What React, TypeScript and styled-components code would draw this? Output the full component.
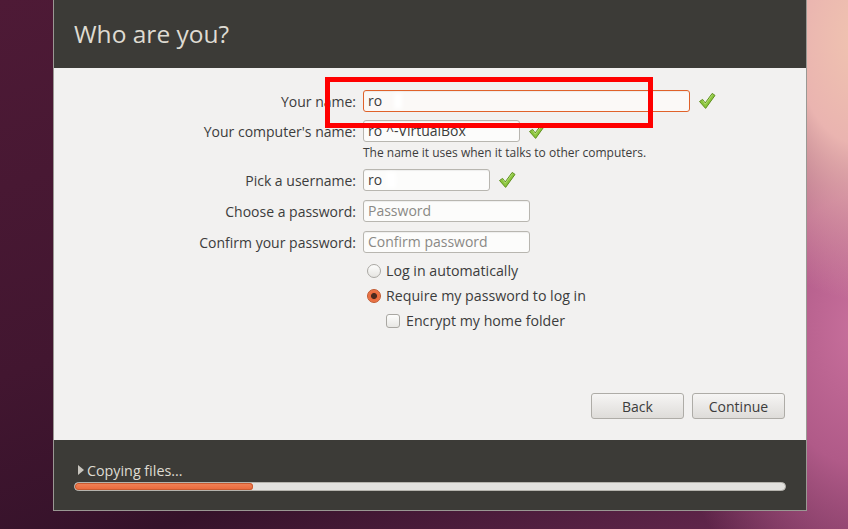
import React from "react";
import styled, { createGlobalStyle } from "styled-components";

const Global = createGlobalStyle`
  html, body { margin: 0; padding: 0; }
  body {
    width: 848px;
    height: 529px;
    overflow: hidden;
    font-family: "Open Sans", "DejaVu Sans", sans-serif;
    background:
      radial-gradient(ellipse 160px 260px at 860px 40px, #f0c4b0 0%, #eab4b0 40%, rgba(220,150,170,0) 100%),
      radial-gradient(ellipse 200px 300px at 860px 330px, #c8709c 0%, #b05a88 45%, rgba(150,70,110,0) 100%),
      linear-gradient(160deg, #4e1a36 0%, #421630 45%, #35122a 70%, #6a2a52 100%);
  }
`;

const Desktop = styled.div`
  position: relative;
  width: 848px;
  height: 529px;
  display: flex;
  align-items: flex-start;
  padding-left: 53px;
  box-sizing: border-box;
`;

const Window = styled.div`
  width: 754px;
  display: flex;
  flex-direction: column;
  border: 1px solid #9a9893;
  border-top: none;
  box-sizing: border-box;
`;

const Header = styled.div`
  height: 68px;
  background: #3c3b37;
  display: flex;
  align-items: center;
  padding-left: 20px;
`;

const Title = styled.h1`
  margin: 0;
  font-family: "Open Sans", sans-serif;
  font-weight: 400;
  font-size: 24.5px;
  color: #dfdbd2;
  margin-top: -2px;
`;

const Content = styled.div`
  height: 372px;
  background: #f2f1f0;
  display: flex;
  flex-direction: column;
  padding: 22px 21px 21px 0;
  box-sizing: border-box;
`;

const Form = styled.div`
  display: flex;
  flex-direction: column;
`;

const Row = styled.div<{ $gap?: number }>`
  display: flex;
  align-items: center;
  height: 22px;
  margin-bottom: ${(p) => p.$gap ?? 8}px;
`;

const Label = styled.div`
  width: 309px;
  padding-right: 7px;
  box-sizing: border-box;
  text-align: right;
  font-size: 14px;
  color: #3c3c3c;
  white-space: nowrap;
`;

const Input = styled.div<{ $w: number; $focus?: boolean; $placeholder?: boolean }>`
  position: relative;
  width: ${(p) => p.$w}px;
  height: 22px;
  box-sizing: border-box;
  border: 1px solid ${(p) => (p.$focus ? "#e0622a" : "#b8b6b0")};
  border-radius: 3px;
  background: ${(p) => (p.$focus ? "#fbf9f7" : "#fcfcfb")};
  box-shadow: inset 0 1px 1px rgba(0, 0, 0, 0.06);
  padding-left: 4px;
  font-size: 14px;
  line-height: 20px;
  color: ${(p) => (p.$placeholder ? "#8a8985" : "#3c3c3c")};
  overflow: hidden;
  white-space: nowrap;
`;

const Smudge = styled.span<{ $left: number; $w: number }>`
  position: absolute;
  top: 2px;
  left: ${(p) => p.$left}px;
  width: ${(p) => p.$w}px;
  height: 16px;
  background: #ffffff;
  filter: blur(2px);
`;

const CheckWrap = styled.div<{ $ml: number }>`
  margin-left: ${(p) => p.$ml}px;
  width: 20px;
  height: 20px;
  display: flex;
  align-items: center;
  justify-content: center;
`;

const Helper = styled.div`
  padding-left: 309px;
  font-size: 12px;
  color: #3c3c3c;
  height: 14px;
  line-height: 14px;
  margin-top: -2px;
  margin-bottom: 9px;
`;

const Options = styled.div`
  display: flex;
  flex-direction: column;
  padding-left: 313px;
  margin-top: 5px;
`;

const OptRow = styled.div<{ $indent?: number }>`
  display: flex;
  align-items: center;
  height: 25px;
  padding-left: ${(p) => p.$indent ?? 0}px;
  font-size: 14.2px;
  color: #3c3c3c;
`;

const Radio = styled.span<{ $on?: boolean }>`
  width: 14px;
  height: 14px;
  border-radius: 50%;
  box-sizing: border-box;
  margin-right: 5px;
  border: 1px solid ${(p) => (p.$on ? "#c0562c" : "#aaa8a3")};
  background: ${(p) =>
    p.$on
      ? "radial-gradient(circle, #4a2a1e 0 2.6px, #e8683a 3.4px, #f08a5e 100%)"
      : "linear-gradient(#fdfdfc, #e6e5e2)"};
`;

const Check = styled.span`
  width: 14px;
  height: 14px;
  border-radius: 3px;
  box-sizing: border-box;
  margin-right: 6px;
  border: 1px solid #a9a7a2;
  background: linear-gradient(#fdfdfc, #e8e7e4);
`;

const Spacer = styled.div`
  flex: 1;
`;

const Buttons = styled.div`
  display: flex;
  justify-content: flex-end;
  gap: 8px;
`;

const Button = styled.button`
  width: 93px;
  height: 26px;
  border: 1px solid #aeaca7;
  border-radius: 3px;
  background: linear-gradient(#f6f5f4, #dedcd9);
  font-family: "Open Sans", sans-serif;
  font-size: 14px;
  color: #3c3c3c;
  padding: 0;
`;

const Footer = styled.div`
  height: 70px;
  background: #3c3b37;
  display: flex;
  flex-direction: column;
  padding: 21px 20px 0 20px;
  box-sizing: border-box;
`;

const Status = styled.div`
  display: flex;
  align-items: center;
  font-size: 14.3px;
  color: #dfdbd2;
  height: 18px;
`;

const Triangle = styled.span`
  width: 0;
  height: 0;
  border-top: 5px solid transparent;
  border-bottom: 5px solid transparent;
  border-left: 6px solid #c8c5be;
  margin: 0 3px 0 4px;
`;

const Track = styled.div`
  margin-top: 3px;
  height: 9px;
  width: 712px;
  border-radius: 5px;
  background: #e2e1de;
  border: 1px solid #b5b3ad;
  box-sizing: border-box;
  overflow: hidden;
`;

const Fill = styled.div`
  height: 100%;
  border-radius: 5px;
  background: linear-gradient(#f28358, #e8683a);
  box-shadow: inset 0 0 0 1px #c95a30;
`;

const Annotation = styled.div`
  position: absolute;
  left: 325px;
  top: 77px;
  width: 328px;
  height: 51px;
  border: 5px solid #ff0000;
  box-sizing: border-box;
  pointer-events: none;
`;

const CheckIcon = () => (
  <svg width="20" height="20" viewBox="0 0 20 20">
    <path
      d="M2.5 10.5 L5.6 8.4 L8.2 12 L15.2 2.4 L18 4.4 L8.6 17.4 Z"
      fill="#8cc63e"
      stroke="#5f8f1e"
      strokeWidth="1"
      strokeLinejoin="round"
    />
    <path d="M5.8 9.6 L8.3 13.2 L15.4 3.6" fill="none" stroke="#c2e68a" strokeWidth="1" opacity="0.7" />
  </svg>
);

export default function App() {
  return (
    <>
      <Global />
      <Desktop>
        <Window>
          <Header>
            <Title>Who are you?</Title>
          </Header>
          <Content>
            <Form>
              <Row>
                <Label>Your name:</Label>
                <Input $w={327} $focus>
                  ro
                  <Smudge $left={30} $w={8} />
                </Input>
                <CheckWrap $ml={7}>
                  <CheckIcon />
                </CheckWrap>
              </Row>
              <Row $gap={6}>
                <Label>Your computer's name:</Label>
                <Input $w={157}>ro`^-VirtualBox</Input>
                <CheckWrap $ml={7}>
                  <CheckIcon />
                </CheckWrap>
              </Row>
              <Helper>The name it uses when it talks to other computers.</Helper>
              <Row $gap={9}>
                <Label>Pick a username:</Label>
                <Input $w={127}>
                  ro
                  <Smudge $left={22} $w={10} />
                </Input>
                <CheckWrap $ml={7}>
                  <CheckIcon />
                </CheckWrap>
              </Row>
              <Row $gap={9}>
                <Label>Choose a password:</Label>
                <Input $w={167} $placeholder>
                  Password
                </Input>
              </Row>
              <Row $gap={0}>
                <Label>Confirm your password:</Label>
                <Input $w={167} $placeholder>
                  Confirm password
                </Input>
              </Row>
            </Form>
            <Options>
              <OptRow>
                <Radio />
                Log in automatically
              </OptRow>
              <OptRow>
                <Radio $on />
                Require my password to log in
              </OptRow>
              <OptRow $indent={19}>
                <Check />
                Encrypt my home folder
              </OptRow>
            </Options>
            <Spacer />
            <Buttons>
              <Button>Back</Button>
              <Button>Continue</Button>
            </Buttons>
          </Content>
          <Footer>
            <Status>
              <Triangle />
              Copying files...
            </Status>
            <Track>
              <Fill style={{ width: `${(178 / 712) * 100}%` }} />
            </Track>
          </Footer>
        </Window>
        <Annotation />
      </Desktop>
    </>
  );
}
